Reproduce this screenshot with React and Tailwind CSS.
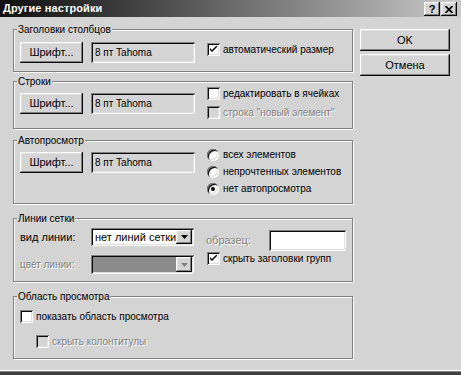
import React from "react";

const raised =
  "bg-[#d4d4d4] shadow-[inset_-1px_-1px_0_#0a0a0a,inset_1px_1px_0_#ffffff,inset_-2px_-2px_0_#808080,inset_2px_2px_0_#dfdfdf]";
const sunken =
  "shadow-[inset_1px_1px_0_#808080,inset_-1px_-1px_0_#ffffff,inset_2px_2px_0_#0a0a0a,inset_-2px_-2px_0_#dfdfdf]";
const disabledText = "text-[#808080] [text-shadow:1px_1px_0_#ffffff]";

function Group({ title, className, children }) {
  return (
    <div
      className={
        "border border-[#808080] shadow-[inset_1px_1px_0_#ffffff,1px_1px_0_#ffffff] " +
        className
      }
    >
      <div className="-mt-[7px] ml-[3px] w-fit px-[1px] bg-[#d4d4d4] leading-[13px]">
        {title}
      </div>
      {children}
    </div>
  );
}

function Btn({ children, className }) {
  return (
    <div
      className={
        raised +
        " flex items-center justify-center leading-[13px] text-[11px] " +
        className
      }
    >
      {children}
    </div>
  );
}

function FontField() {
  return (
    <div
      className={
        sunken +
        " ml-[8px] w-[104px] h-[21px] bg-[#d4d4d4] flex items-center pl-[4px] leading-[13px]"
      }
    >
      8 пт Tahoma
    </div>
  );
}

function FontRow() {
  return (
    <div className="flex items-start">
      <Btn className="w-[63px] h-[21px]">Шрифт...</Btn>
      <FontField />
    </div>
  );
}

function Check({ checked, disabled, label }) {
  return (
    <div className="flex items-center h-[13px]">
      <div
        className={
          sunken +
          " w-[13px] h-[13px] shrink-0 flex items-center justify-center " +
          (disabled ? "bg-[#d4d4d4]" : "bg-white")
        }
      >
        {checked && (
          <svg width="7" height="7" viewBox="0 0 7 7">
            <path
              d="M0 2 L0 4 L2 6 L7 1 L7 -1 L2 4 Z"
              fill={disabled ? "#808080" : "#000"}
            />
          </svg>
        )}
      </div>
      <span
        className={
          "ml-[3px] leading-[13px] whitespace-nowrap " +
          (disabled ? disabledText : "")
        }
      >
        {label}
      </span>
    </div>
  );
}

function Radio({ checked, label }) {
  return (
    <div className="flex items-center h-[13px]">
      <div className="w-[12px] h-[12px] shrink-0 rounded-full bg-white shadow-[inset_1px_1px_0_#808080,inset_-1px_-1px_0_#ffffff,inset_2px_2px_0_#0a0a0a,inset_-2px_-2px_0_#dfdfdf] flex items-center justify-center">
        {checked && <div className="w-[4px] h-[4px] rounded-full bg-black" />}
      </div>
      <span className="ml-[4px] leading-[13px] whitespace-nowrap">{label}</span>
    </div>
  );
}

function Select({ value, disabled, className }) {
  return (
    <div
      className={
        sunken +
        " w-[103px] flex items-stretch p-[2px] " +
        (disabled ? "bg-[#8c8c8c] " : "bg-white ") +
        className
      }
    >
      <div className="flex-1 flex items-center pl-[2px] leading-[13px] text-[11px] whitespace-nowrap overflow-hidden">
        {value}
      </div>
      <div className={raised + " w-[16px] flex items-center justify-center"}>
        <svg width="7" height="4" viewBox="0 0 7 4">
          <path d="M0 0 H7 L3.5 4 Z" fill={disabled ? "#808080" : "#000"} />
        </svg>
      </div>
    </div>
  );
}

export default function App() {
  return (
    <div className="w-[461px] h-[375px] bg-[#d4d4d4] flex flex-col text-[10px] text-black font-['Liberation_Sans',Arial,sans-serif] overflow-hidden">
      {/* title bar */}
      <div className="h-[17px] shrink-0 bg-linear-to-r from-[#101010] via-[#6a6a6a] to-[#cbcbcb] flex items-start pt-[2px] pl-[3px] pr-[4px]">
        <div className="flex-1 text-white font-bold leading-[13px] text-[11px] tracking-[0.1px]">
          Другие настройки
        </div>
        <div className={raised + " w-[16px] h-[14px] flex items-center justify-center font-bold text-[11px] leading-[11px]"}>
          ?
        </div>
        <div className={raised + " ml-[1px] w-[16px] h-[14px] flex items-center justify-center"}>
          <svg width="8" height="7" viewBox="0 0 8 7">
            <path d="M0.5 0 L7.5 7 M7.5 0 L0.5 7" stroke="#000" strokeWidth="1.7" />
          </svg>
        </div>
      </div>

      {/* body */}
      <div className="flex items-start pt-[12px] pl-[13px]">
        <div className="w-[340px] flex flex-col">
          {/* Заголовки столбцов */}
          <Group title="Заголовки столбцов" className="h-[43px]">
            <div className="flex items-start mt-[6px] pl-[6px]">
              <FontRow />
              <div className="ml-[12px] mt-[1px]">
                <Check checked label="автоматический размер" />
              </div>
            </div>
          </Group>

          {/* Строки */}
          <Group title="Строки" className="h-[48px] mt-[9px]">
            <div className="flex items-start -mt-[1px] pl-[6px]">
              <div className="mt-[6px]">
                <FontRow />
              </div>
              <div className="ml-[12px] flex flex-col gap-[6px]">
                <Check label="редактировать в ячейках" />
                <Check disabled label="строка &quot;новый элемент&quot;" />
              </div>
            </div>
          </Group>

          {/* Автопросмотр */}
          <Group title="Автопросмотр" className="h-[64px] mt-[11px]">
            <div className="flex items-start pl-[6px]">
              <div className="mt-[5px]">
                <FontRow />
              </div>
              <div className="ml-[12px] mt-[1px] flex flex-col gap-[4px]">
                <Radio label="всех элементов" />
                <Radio label="непрочтенных элементов" />
                <Radio checked label="нет автопросмотра" />
              </div>
            </div>
          </Group>

          {/* Линии сетки */}
          <Group title="Линии сетки" className="h-[64px] mt-[14px]">
            <div className="flex items-start pl-[6px]">
              <div className="flex flex-col">
                <div className="flex items-center mt-[3px] h-[18px]">
                  <span className="w-[71px] leading-[13px] text-[11px]">вид линии:</span>
                  <Select value="нет линий сетки" className="h-[18px]" />
                </div>
                <div className="flex items-center mt-[9px] h-[19px]">
                  <span className={"w-[71px] leading-[13px] " + disabledText}>
                    цвет линии:
                  </span>
                  <Select disabled value="" className="h-[19px]" />
                </div>
              </div>
              <div className="ml-[13px] flex flex-col">
                <div className="flex items-center mt-[5px] h-[21px]">
                  <span className={"-ml-[1px] w-[63px] leading-[13px] text-[11px] " + disabledText}>
                    образец:
                  </span>
                  <div className={sunken + " w-[77px] h-[21px] bg-white"} />
                </div>
                <div className="mt-[1px]">
                  <Check checked label="скрыть заголовки групп" />
                </div>
              </div>
            </div>
          </Group>

          {/* Область просмотра */}
          <Group title="Область просмотра" className="h-[63px] mt-[14px]">
            <div className="mt-[7px] pl-[6px]">
              <Check label="показать область просмотра" />
            </div>
            <div className="mt-[12px] pl-[22px]">
              <Check disabled label="скрыть колонтитулы" />
            </div>
          </Group>
        </div>

        {/* buttons */}
        <div className="ml-[7px] w-[90px] flex flex-col gap-[3px]">
          <Btn className="h-[22px] w-[90px]">OK</Btn>
          <Btn className="h-[22px] w-[90px]">Отмена</Btn>
        </div>
      </div>

      <div className="mt-auto h-[1px] bg-white shrink-0" />
      <div className="h-[1px] bg-[#808080] shrink-0" />
      <div className="h-[3px] bg-[#404040] shrink-0" />
    </div>
  );
}
